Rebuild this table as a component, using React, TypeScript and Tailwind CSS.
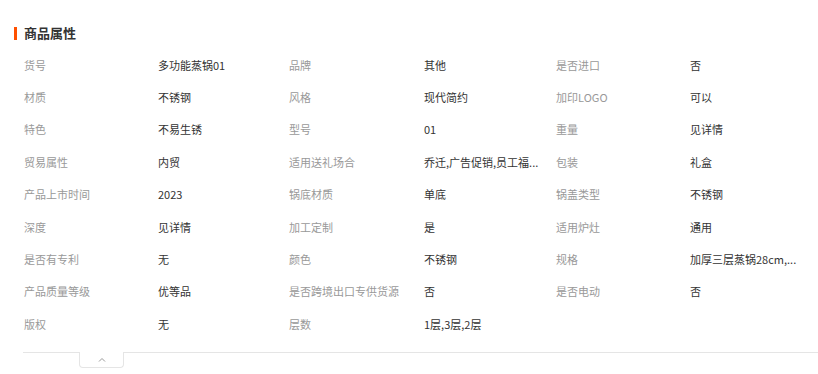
const ROWS: [string, string][][] = [
  [["货号", "多功能蒸锅01"], ["品牌", "其他"], ["是否进口", "否"]],
  [["材质", "不锈钢"], ["风格", "现代简约"], ["加印LOGO", "可以"]],
  [["特色", "不易生锈"], ["型号", "01"], ["重量", "见详情"]],
  [["贸易属性", "内贸"], ["适用送礼场合", "乔迁,广告促销,员工福..."], ["包装", "礼盒"]],
  [["产品上市时间", "2023"], ["锅底材质", "单底"], ["锅盖类型", "不锈钢"]],
  [["深度", "见详情"], ["加工定制", "是"], ["适用炉灶", "通用"]],
  [["是否有专利", "无"], ["颜色", "不锈钢"], ["规格", "加厚三层蒸锅28cm,..."]],
  [["产品质量等级", "优等品"], ["是否跨境出口专供货源", "否"], ["是否电动", "否"]],
  [["版权", "无"], ["层数", "1层,3层,2层"]],
];

export default function App() {
  return (
    <div
      className="w-[818px] h-[374px] overflow-hidden bg-white"
      style={{ fontFamily: '"Noto Sans CJK SC", "Noto Sans", sans-serif' }}
    >
      {/* Title */}
      <div className="flex items-center gap-[7px] pl-[14px] pt-[22px] h-[44px]">
        <span className="w-[3px] h-[13px] bg-[#ff5000]" />
        <h2 className="text-[13px] leading-[20px] font-bold text-[#333]">商品属性</h2>
      </div>

      {/* Attributes */}
      <div className="ml-[24px] mt-[4.5px] grid grid-cols-[134px_131px_135px_132px_134px_1fr] auto-rows-[32.4px] items-center text-[11px] leading-[16px]">
        {ROWS.map((row, i) =>
          row.map(([label, value], j) => (
            <div key={`${i}-${j}`} className="contents">
              <span className="text-[#999] whitespace-nowrap">{label}</span>
              <span className="text-[#333] whitespace-nowrap">{value}</span>
            </div>
          ))
        )}
      </div>

      {/* Divider + collapse tab */}
      <div className="ml-[23px] mt-[11.5px] border-t border-[#e5e5e5] relative">
        <button className="absolute left-[56px] -top-px w-[45px] h-[16px] bg-white border border-t-0 border-[#e5e5e5] rounded-b-[4px] flex items-center justify-center">
          <svg width="8" height="5" viewBox="0 0 8 5" fill="none">
            <polyline points="1,4.5 4,1.5 7,4.5" stroke="#999" strokeWidth="1" />
          </svg>
        </button>
      </div>
    </div>
  );
}
